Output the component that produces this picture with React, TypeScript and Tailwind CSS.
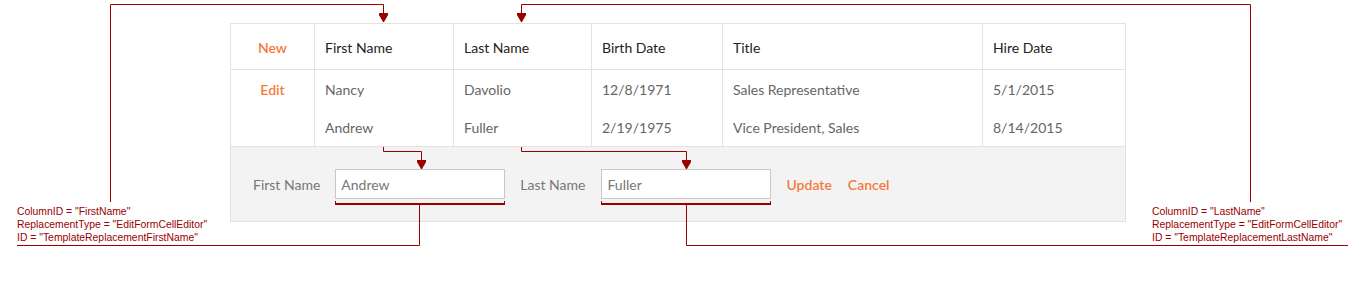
import React from "react";

const cols = "grid grid-cols-[84px_139px_138px_131px_260px_1fr]";
const cell = "border-r border-[#e2e2e2] px-[10px] flex items-center";

function Arrow({ x, y }: { x: number; y: number }) {
  // small down-pointing arrowhead, x = centre line, y = top
  const p = [
    [x - 4.5, y],
    [x + 4.5, y],
    [x + 4.5, y + 2],
    [x + 0.5, y + 9],
    [x - 0.5, y + 9],
    [x - 4.5, y + 2],
  ]
    .map((q) => q.join(","))
    .join(" ");
  return <polygon points={p} fill="#990000" />;
}

function Callouts() {
  const red = "#990000";
  return (
    <svg className="absolute inset-0 pointer-events-none" width="1370" height="290">
      <g fill="none" stroke={red} strokeWidth="1">
        <path d="M110.5 202 V4.5 H383.5 V14" />
        <path d="M521.5 14 V4.5 H1250.5 V202" />
        <path d="M383.5 147 V151.5 H421.5 V161" />
        <path d="M521.5 147 V151.5 H686.5 V161" />
        <path d="M419.5 205 V245.5 H17" />
        <path d="M686.5 205 V245.5 H1348" />
      </g>
      <Arrow x={383.5} y={13} />
      <Arrow x={521.5} y={13} />
      <Arrow x={421.5} y={160} />
      <Arrow x={686.5} y={160} />
      <g fill={red}>
        <rect x="335" y="203" width="170" height="2" />
        <rect x="335" y="201" width="1" height="2" />
        <rect x="504" y="201" width="1" height="2" />
        <rect x="601" y="203" width="170" height="2" />
        <rect x="601" y="201" width="1" height="2" />
        <rect x="770" y="201" width="1" height="2" />
      </g>
    </svg>
  );
}

function Note({ lines, className }: { lines: string[]; className: string }) {
  return (
    <div className={"absolute text-[10.4px] leading-[13px] text-[#990000] font-['Liberation_Sans',Arial,sans-serif] " + className}>
      {lines.map((l) => (
        <div key={l}>{l}</div>
      ))}
    </div>
  );
}

export default function App() {
  const headers = ["First Name", "Last Name", "Birth Date", "Title", "Hire Date"];
  const rows = [
    ["Nancy", "Davolio", "12/8/1971", "Sales Representative", "5/1/2015"],
    ["Andrew", "Fuller", "2/19/1975", "Vice President, Sales", "8/14/2015"],
  ];

  return (
    <div className="relative w-[1370px] h-[290px] bg-white overflow-hidden pt-[23px] pl-[230px] font-['Lato',sans-serif] text-[14px]">
      <div className="w-[896px] border border-[#e2e2e2]">
        <div className={cols + " h-[46px] border-b border-[#e2e2e2] text-[#222]"}>
          <div className={cell + " pt-[2px] justify-center font-semibold text-[#f5793b]"}>New</div>
          {headers.map((h, i) => (
            <div key={h} className={cell + " pt-[2px]" + (i === headers.length - 1 ? " border-r-0" : "")}>
              {h}
            </div>
          ))}
        </div>

        {rows.map((r, ri) => (
          <div key={ri} className={cols + " h-[38px] text-[#666]"}>
            <div className={cell + " justify-center font-semibold text-[#f5793b]"}>{ri === 0 ? "Edit" : ""}</div>
            {r.map((v, i) => (
              <div key={i} className={cell + (i === r.length - 1 ? " border-r-0" : "")}>
                {v}
              </div>
            ))}
          </div>
        ))}

        <div className="h-[75px] bg-[#f3f3f3] border-t border-[#e2e2e2] flex items-center pl-[22px] text-[#777]">
          <span>First Name</span>
          <div className="ml-[15px] w-[170px] h-[30px] bg-white border border-[#c8c8c8] px-[5px] flex items-center">Andrew</div>
          <span className="ml-[15px]">Last Name</span>
          <div className="ml-[16px] w-[170px] h-[30px] bg-white border border-[#c8c8c8] px-[5px] flex items-center">Fuller</div>
          <span className="ml-[15px] font-semibold text-[#f5793b]">Update</span>
          <span className="ml-[16px] font-semibold text-[#f5793b]">Cancel</span>
        </div>
      </div>

      <Callouts />
      <Note
        className="left-[17px] top-[205px]"
        lines={['ColumnID = "FirstName"', 'ReplacementType = "EditFormCellEditor"', 'ID = "TemplateReplacementFirstName"']}
      />
      <Note
        className="left-[1152px] top-[205px]"
        lines={['ColumnID = "LastName"', 'ReplacementType = "EditFormCellEditor"', 'ID = "TemplateReplacementLastName"']}
      />
    </div>
  );
}
